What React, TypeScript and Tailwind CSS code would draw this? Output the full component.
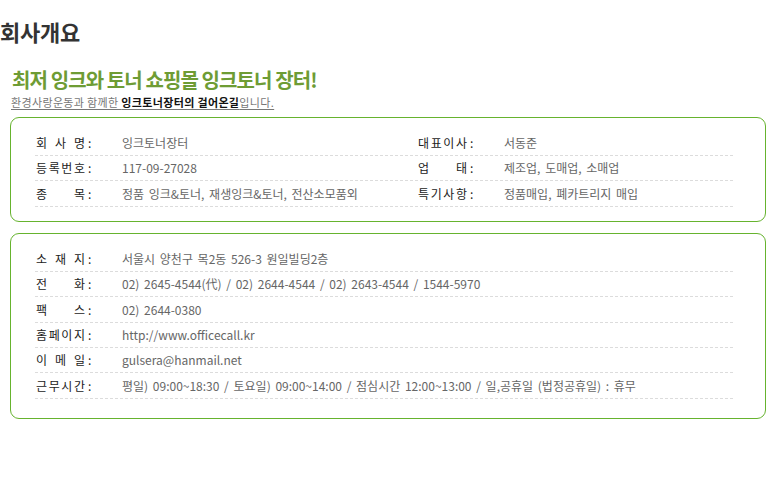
import React from 'react'

type Field = { label: string; value: string }

const overview: [Field, Field][] = [
  [
    { label: '회사명', value: '잉크토너장터' },
    { label: '대표이사', value: '서동준' },
  ],
  [
    { label: '등록번호', value: '117-09-27028' },
    { label: '업태', value: '제조업, 도매업, 소매업' },
  ],
  [
    { label: '종목', value: '정품 잉크&토너, 재생잉크&토너, 전산소모품외' },
    { label: '특기사항', value: '정품매입, 폐카트리지 매입' },
  ],
]

const contact: Field[] = [
  { label: '소재지', value: '서울시 양천구 목2동 526-3 원일빌딩2층' },
  { label: '전화', value: '02) 2645-4544(代) / 02) 2644-4544 / 02) 2643-4544 / 1544-5970' },
  { label: '팩스', value: '02) 2644-0380' },
  { label: '홈페이지', value: 'http://www.officecall.kr' },
  { label: '이메일', value: 'gulsera@hanmail.net' },
  {
    label: '근무시간',
    value: '평일) 09:00~18:30 / 토요일) 09:00~14:00 / 점심시간 12:00~13:00 / 일,공휴일 (법정공휴일) : 휴무',
  },
]

const overviewHeights = ['h-[26px]', 'h-[25px]', 'h-[26px]']
const contactHeights = ['h-[26px]', 'h-[25px]', 'h-[26px]', 'h-[25px]', 'h-[25px]', 'h-[26px]']

function Label({ text }: { text: string }) {
  return (
    <div className="flex items-center w-[87px] shrink-0 pl-[1px] text-[#222]">
      <span className="flex justify-between w-[49px]">
        {text.split('').map((ch, i) => (
          <span key={i}>{ch}</span>
        ))}
      </span>
      <span className="ml-[3px]">:</span>
    </div>
  )
}

export default function App() {
  return (
    <div className="w-[775px] h-[484px] bg-white font-['Noto_Sans_CJK_KR',sans-serif]">
      {/* Title */}
      <h1 className="pt-[16px] text-[22px] leading-[30px] font-bold tracking-[-0.2px] text-[#333]">
        회사개요
      </h1>

      {/* Headline */}
      <div className="pl-[12px] pt-[22px]">
        <p className="text-[20px] leading-[24px] font-bold tracking-[-0.9px] text-[#6e9c34]">
          최저 잉크와 토너 쇼핑몰 잉크토너 장터!
        </p>
        <p className="mt-[3px] -ml-[1px] text-[11px] leading-[14px] tracking-[0.35px] text-[#777] underline underline-offset-2">
          환경사랑운동과 함께한 <b className="text-[#111]">잉크토너장터의 걸어온길</b>입니다.
        </p>
      </div>

      {/* Company overview */}
      <div className="mt-[8px] ml-[10px] w-[756px] rounded-[9px] border border-[#66b32e] pt-[12px] pb-[14px] pl-[24px] pr-[32px] text-[12px] [word-spacing:2px]">
        {overview.map((row, i) => (
          <div
            key={i}
            className={`flex items-center border-b border-dashed border-[#dcdcdc] ${overviewHeights[i]}`}
          >
            <div className="flex items-center w-[382px]">
              <Label text={row[0].label} />
              <span className="text-[#666]">{row[0].value}</span>
            </div>
            <div className="flex items-center">
              <Label text={row[1].label} />
              <span className="text-[#666]">{row[1].value}</span>
            </div>
          </div>
        ))}
      </div>

      {/* Contact */}
      <div className="mt-[11px] ml-[10px] w-[756px] rounded-[9px] border border-[#66b32e] pt-[12px] pb-[19px] pl-[24px] pr-[32px] text-[12px] [word-spacing:2px]">
        {contact.map((f, i) => (
          <div
            key={f.label}
            className={`flex items-center border-b border-dashed border-[#dcdcdc] ${contactHeights[i]}`}
          >
            <Label text={f.label} />
            <span className="text-[#666] whitespace-nowrap">{f.value}</span>
          </div>
        ))}
      </div>
    </div>
  )
}
